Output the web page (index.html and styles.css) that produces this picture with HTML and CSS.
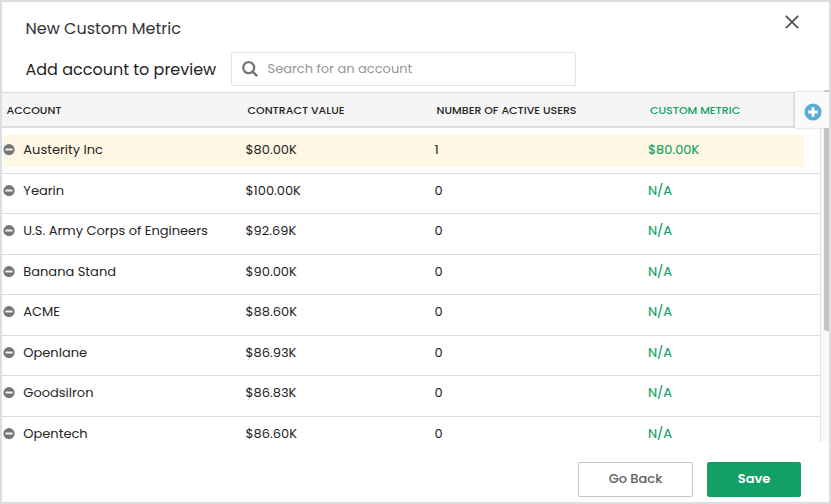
FILE: index.html
```html
<!DOCTYPE html>
<html lang="en">
<head>
<meta charset="utf-8">
<title>New Custom Metric</title>
<link rel="stylesheet" href="styles.css">
</head>
<body>
<svg width="0" height="0" class="defs" aria-hidden="true">
  <symbol id="minus" viewBox="0 0 12 12"><circle cx="6" cy="5.6" r="5.6" fill="#757575"/><rect x="2.4" y="4.5" width="7.2" height="2.1" rx=".5" fill="#f0f0f0"/></symbol>
</svg>
<main class="dialog">
  <header class="top">
    <div class="title-row">
      <h1>New Custom Metric</h1>
      <svg class="close" viewBox="0 0 14 14"><path d="M.8.8l12.4 12.4M13.2.8L.8 13.2" fill="none" stroke="#4d4d4d" stroke-width="1.7"/></svg>
    </div>
    <div class="search-row">
      <h2>Add account to preview</h2>
      <div class="search">
        <svg viewBox="0 0 16 16"><circle cx="6.7" cy="6.7" r="5.5" fill="none" stroke="#757575" stroke-width="2.3"/><path d="M10.7 10.7l4.4 4.4" stroke="#757575" stroke-width="2.6"/></svg>
        <span>Search for an account</span>
      </div>
    </div>
  </header>
  <section class="table">
    <div class="thead">
      <span>ACCOUNT</span><span>CONTRACT VALUE</span><span>NUMBER OF ACTIVE USERS</span><span class="h-metric">CUSTOM METRIC</span>
      <div class="add"><svg viewBox="0 0 18 18"><circle cx="9" cy="9" r="8.6" fill="#5bacd3"/><path d="M9 4.2v9.6M4.2 9h9.6" stroke="#fff" stroke-width="2.8"/></svg></div>
    </div>
    <div class="body">
      <div class="rows">
        <div class="row active"><svg><use href="#minus"/></svg><span>Austerity Inc</span><span>$80.00K</span><span>1</span><span class="metric">$80.00K</span></div>
        <div class="row"><svg><use href="#minus"/></svg><span>Yearin</span><span>$100.00K</span><span>0</span><span class="metric">N/A</span></div>
        <div class="row"><svg><use href="#minus"/></svg><span>U.S. Army Corps of Engineers</span><span>$92.69K</span><span>0</span><span class="metric">N/A</span></div>
        <div class="row"><svg><use href="#minus"/></svg><span>Banana Stand</span><span>$90.00K</span><span>0</span><span class="metric">N/A</span></div>
        <div class="row"><svg><use href="#minus"/></svg><span>ACME</span><span>$88.60K</span><span>0</span><span class="metric">N/A</span></div>
        <div class="row"><svg><use href="#minus"/></svg><span>Openlane</span><span>$86.93K</span><span>0</span><span class="metric">N/A</span></div>
        <div class="row"><svg><use href="#minus"/></svg><span>Goodsilron</span><span>$86.83K</span><span>0</span><span class="metric">N/A</span></div>
        <div class="row"><svg><use href="#minus"/></svg><span>Opentech</span><span>$86.60K</span><span>0</span><span class="metric">N/A</span></div>
      </div>
      <div class="track"><div class="thumb"></div></div>
    </div>
  </section>
  <footer>
    <button class="back">Go Back</button>
    <button class="save">Save</button>
  </footer>
</main>
</body>
</html>
```
FILE: styles.css
```css
* { box-sizing: border-box; }
body { margin: 0; font-family: Poppins, Inter, sans-serif; color: #242424; }
.defs { position: absolute; }
.dialog { width: 831px; height: 504px; border: 2px solid #dbdfe3; background: #fff; display: flex; flex-direction: column; }
.top { height: 90px; }
.title-row { display: flex; justify-content: space-between; align-items: flex-start; padding: 13px 30.5px 0 23.5px; height: 50px; }
h1, h2 { margin: 0; font-size: 16px; font-weight: 400; line-height: 26px; white-space: nowrap; }
h1 { color: #333; padding-top: 1px; }
h2 { width: 205.5px; padding-top: 1px; }
.close { width: 14px; height: 14px; }
.search-row { display: flex; align-items: center; padding-left: 23.5px; height: 34px; }
.search { width: 345px; height: 34px; border: 1px solid #e2e2e2; border-radius: 2px; display: flex; align-items: center; padding-left: 9.5px; gap: 10px; color: #959595; font-size: 13px; }
.search svg { width: 16px; height: 16px; }
.table { display: flex; flex-direction: column; height: 350px; }
.thead { position: relative; flex: none; height: 36px; border-top: 1px solid #d9dbdc; border-bottom: 2px solid #d9dbdc; background: #f5f5f5; display: grid; grid-template-columns: 241px 189px 213.5px 1fr; align-items: center; padding: 2px 0 0 4.5px; font-size: 11px; font-weight: 500; white-space: nowrap; }
.h-metric { color: #12a066; }
.thead::after { content: ""; position: absolute; right: 0; top: -3px; width: 5px; height: 2px; background: #c4c4c4; border-radius: 3px 0 0 0; }
.add { position: absolute; right: 0; top: -1px; width: 34px; height: 36px; background: #fafafa; box-shadow: -1px 0 2px #c9cccd, 0 0 1px #ddd; display: flex; align-items: center; justify-content: center; padding: 3px 0 0 2px; }
.add svg { width: 18px; height: 18px; }
.body { display: flex; height: 314px; }
.rows { width: 818px; }
.row { height: 40px; border-bottom: 1px solid #d9dbdc; display: grid; grid-template-columns: 20.3px 222.2px 189px 213.5px 1fr; grid-template-rows: 33px; align-items: center; padding-left: 1px; font-size: 13px; white-space: nowrap; }
.row svg { width: 12px; height: 12px; }
.row:nth-child(odd) { height: 41px; }
.row.active { height: 46px; padding-top: 5px; background: linear-gradient(#fff6e4, #fff6e4) 2px 7px / 800px 32px no-repeat; }
.row:last-child { height: 25px; border-bottom: 0; }
.row .metric { color: #12a066; -webkit-text-stroke: .15px #12a066; }
.track { width: 9px; border-left: 1px solid #e4e4e4; background: #fafafa; display: flex; justify-content: flex-end; }
.thumb { width: 5px; height: 203px; background: #c4c4c4; border-radius: 0 0 0 3px; }
footer { display: flex; justify-content: flex-end; gap: 14px; padding: 20px 28px 0 0; }
button { height: 35px; border-radius: 2px; font: 500 13px Poppins, Inter, sans-serif; padding: 0 0 2px; }
.back { width: 115px; border: 1px solid #c5c5c5; background: #fff; color: #606060; }
.save { width: 94px; border: 0; background: #12a066; color: #fff; font-weight: 600; }
```
